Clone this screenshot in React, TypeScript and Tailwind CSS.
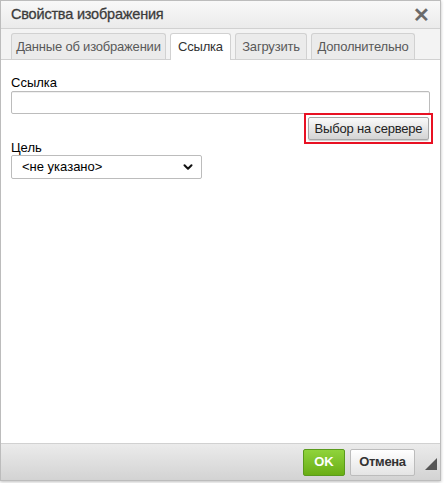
import { ChevronDown } from "lucide-react";

const tabs = [
  { label: "Данные об изображении", w: "w-[155px]" },
  { label: "Ссылка", w: "w-[61px]" },
  { label: "Загрузить", w: "w-[72px]" },
  { label: "Дополнительно", w: "w-[104px]" },
];

export default function App() {
  return (
    <div className="relative h-[483px] w-[444px] bg-white font-['Liberation_Sans',Arial,sans-serif]">
      <div className="flex h-[481px] w-[441px] flex-col border border-[#bcbcbc] bg-white shadow-[0_1px_3px_rgba(0,0,0,0.25)]">
        {/* title */}
        <div className="flex h-[28px] items-center justify-between border-b border-[#d1d1d1] bg-gradient-to-b from-[#f8f8f8] to-[#ebebeb] pl-[10px] pr-[10px]">
          <span className="whitespace-nowrap text-[14.5px] tracking-[-0.2px] text-[#3c3c3c] [-webkit-text-stroke:0.3px_#3c3c3c]">
            Свойства изображения
          </span>
          <span className="text-[20px] font-bold leading-none text-[#6a6a6a]">✕</span>
        </div>

        {/* tabs */}
        <div className="flex h-[31px] items-end gap-[4px] border-b border-[#d1d1d1] bg-[#f3f3f3] px-[10px]">
          {tabs.map((t, i) => (
            <div
              key={t.label}
              className={`flex h-[26px] shrink-0 items-center justify-center whitespace-nowrap rounded-t-[3px] border border-b-0 border-[#d1d1d1] text-[13px] tracking-[-0.2px] ${t.w} ${
                i === 1 ? "-mb-px h-[27px] bg-white text-[#333]" : "bg-[#ebebeb] text-[#595959]"
              }`}
            >
              {t.label}
            </div>
          ))}
        </div>

        {/* body */}
        <div className="flex flex-1 flex-col px-[10px] pt-[15px]">
          <label className="text-[13px] leading-[16px] text-black">Ссылка</label>
          <div className="h-[23px] w-full rounded-[2px] border border-[#bcbcbc] bg-white shadow-[inset_0_1px_0_rgba(0,0,0,0.06)]" />
          <div className="-mt-[1px] flex justify-end">
            <div className="-mr-[3px] border-2 border-[#e81123] p-[2px]">
              <div className="flex h-[23px] w-[121px] items-center justify-center whitespace-nowrap rounded-[2px] border border-[#a6a6a6] bg-gradient-to-b from-[#fafafa] to-[#d4d4d4] text-[13px] tracking-[-0.2px] text-[#222] shadow-[0_1px_1px_rgba(0,0,0,0.2)]">
                Выбор на сервере
              </div>
            </div>
          </div>
          <label className="-mt-[4px] text-[13px] leading-[16px] text-black">Цель</label>
          <div className="-mt-[1px] flex h-[24px] w-[191px] items-center justify-between rounded-[2px] border border-[#bcbcbc] bg-white pl-[10px] pr-[6px] text-[13px] text-black">
            <span>&lt;не указано&gt;</span>
            <ChevronDown size={14} strokeWidth={3.5} className="text-[#111]" />
          </div>
        </div>

        {/* footer */}
        <div className="flex h-[37px] items-center justify-end gap-[5px] border-t border-[#d1d1d1] bg-gradient-to-b from-[#ebebeb] to-[#d3d3d3] pr-[25px]">
          <div className="flex h-[27px] w-[42px] items-center justify-center rounded-[2px] border border-[#5a9a1c] bg-gradient-to-b from-[#8fd33b] to-[#6aae13] text-[13px] font-bold text-white">
            OK
          </div>
          <div className="flex h-[27px] w-[65px] items-center justify-center rounded-[2px] border border-[#bcbcbc] bg-gradient-to-b from-[#ffffff] to-[#e4e4e4] text-[13px] font-bold tracking-[-0.3px] text-[#333]">
            Отмена
          </div>
        </div>
      </div>
      {/* resize grip */}
      <div className="absolute left-[425px] top-[458px] h-0 w-0 border-b-[12px] border-l-[12px] border-b-[#555] border-l-transparent" />
    </div>
  );
}
